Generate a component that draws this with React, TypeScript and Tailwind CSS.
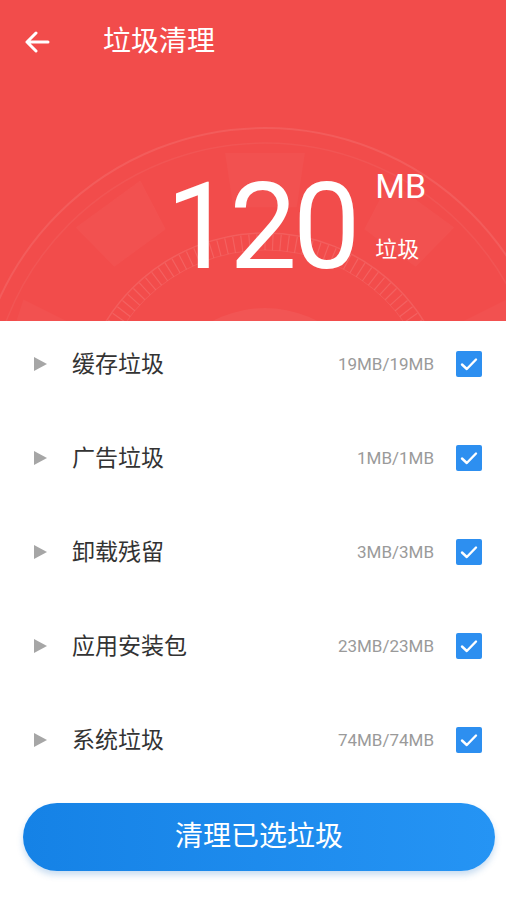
import React from "react";

const rows = [
  { name: "缓存垃圾", size: "19MB/19MB" },
  { name: "广告垃圾", size: "1MB/1MB" },
  { name: "卸载残留", size: "3MB/3MB" },
  { name: "应用安装包", size: "23MB/23MB" },
  { name: "系统垃圾", size: "74MB/74MB" },
];

const font = { fontFamily: 'Roboto, "Noto Sans CJK SC", sans-serif' };

function Decoration() {
  const cx = 265;
  const cy = 420;
  const ticks = [];
  for (let i = 0; i < 144; i++) {
    const a = (i * 2.5 * Math.PI) / 180;
    const x1 = cx + 170 * Math.sin(a);
    const y1 = cy - 170 * Math.cos(a);
    const x2 = cx + 186 * Math.sin(a);
    const y2 = cy - 186 * Math.cos(a);
    ticks.push(<line key={i} x1={x1} y1={y1} x2={x2} y2={y2} stroke="white" strokeOpacity="0.12" strokeWidth="1.2" />);
  }
  const seg = (deg: number) => {
    const half = 8.5;
    const r1 = 215;
    const r2 = 270;
    const p = (r: number, d: number) => {
      const a = (d * Math.PI) / 180;
      return `${cx + r * Math.sin(a)},${cy - r * Math.cos(a)}`;
    };
    return (
      <polygon
        key={deg}
        points={`${p(r1, deg - half)} ${p(r2, deg - half)} ${p(r2, deg + half)} ${p(r1, deg + half)}`}
        fill="white"
        fillOpacity="0.03"
      />
    );
  };
  return (
    <svg className="absolute inset-0" width="506" height="321" viewBox="0 0 506 321">
      <circle cx={cx} cy={cy} r="292" fill="none" stroke="white" strokeOpacity="0.09" strokeWidth="2" />
      <circle cx={cx} cy={cy} r="277" fill="none" stroke="white" strokeOpacity="0.05" strokeWidth="1.5" />
      {[-72, -36, 0, 36, 72].map(seg)}
      <circle cx={cx} cy={cy} r="187" fill="none" stroke="white" strokeOpacity="0.1" strokeWidth="1.5" />
      {ticks}
      <circle cx={cx} cy={cy} r="170" fill="none" stroke="white" strokeOpacity="0.08" strokeWidth="1" />
      <circle cx={cx} cy={cy} r="112" fill="white" fillOpacity="0.05" />
    </svg>
  );
}

export default function App() {
  return (
    <div className="w-[506px] h-[900px] bg-white overflow-hidden" style={font}>
      <div className="relative h-[321px] bg-[#f24c4b] overflow-hidden">
        <Decoration />
        <div className="relative flex items-center h-[84px] pl-[24px]">
          <svg width="26" height="22" viewBox="0 0 26 22" fill="none">
            <path d="M24 11H3M12 2L3 11l9 9" stroke="white" strokeWidth="3" strokeLinecap="round" strokeLinejoin="round" />
          </svg>
          <span className="ml-[53px] text-[28px] text-white leading-none">垃圾清理</span>
        </div>
        <div className="relative flex justify-start mt-[83px] pl-[166px]">
          <span className="text-[120px] leading-none text-white tracking-[-4px] font-normal">120</span>
          <div className="ml-[19px] flex flex-col text-white">
            <span className="text-[34px] leading-none mt-[2px]">MB</span>
            <span className="text-[22px] leading-none mt-[36px]">垃圾</span>
          </div>
        </div>
      </div>
      <div className="flex flex-col">
        {rows.map((r) => (
          <div key={r.name} className="h-[94px] pb-[8px] flex items-center pl-[34px] pr-[24px]">
            <svg width="13" height="14" viewBox="0 0 13 14">
              <path d="M0 0L13 7L0 14Z" fill="#a6a6a6" />
            </svg>
            <span className="ml-[25px] text-[23px] text-[#333333] leading-none">{r.name}</span>
            <span className="ml-auto text-[17px] text-[#9a9a9a] leading-none">{r.size}</span>
            <div className="ml-[22px] w-[26px] h-[26px] rounded-[2px] bg-[#2d8ff0] flex items-center justify-center">
              <svg width="18" height="14" viewBox="0 0 18 14" fill="none">
                <path d="M2 7.5L6.8 12L16 2.5" stroke="white" strokeWidth="2.4" strokeLinecap="round" strokeLinejoin="round" />
              </svg>
            </div>
          </div>
        ))}
      </div>
      <div className="pl-[23px] mt-[12px]">
        <button className="w-[472px] h-[68px] rounded-full bg-gradient-to-r from-[#1582e6] to-[#2594f4] text-white text-[28px] shadow-[0_4px_6px_rgba(40,120,200,0.25)]">
          清理已选垃圾
        </button>
      </div>
    </div>
  );
}
